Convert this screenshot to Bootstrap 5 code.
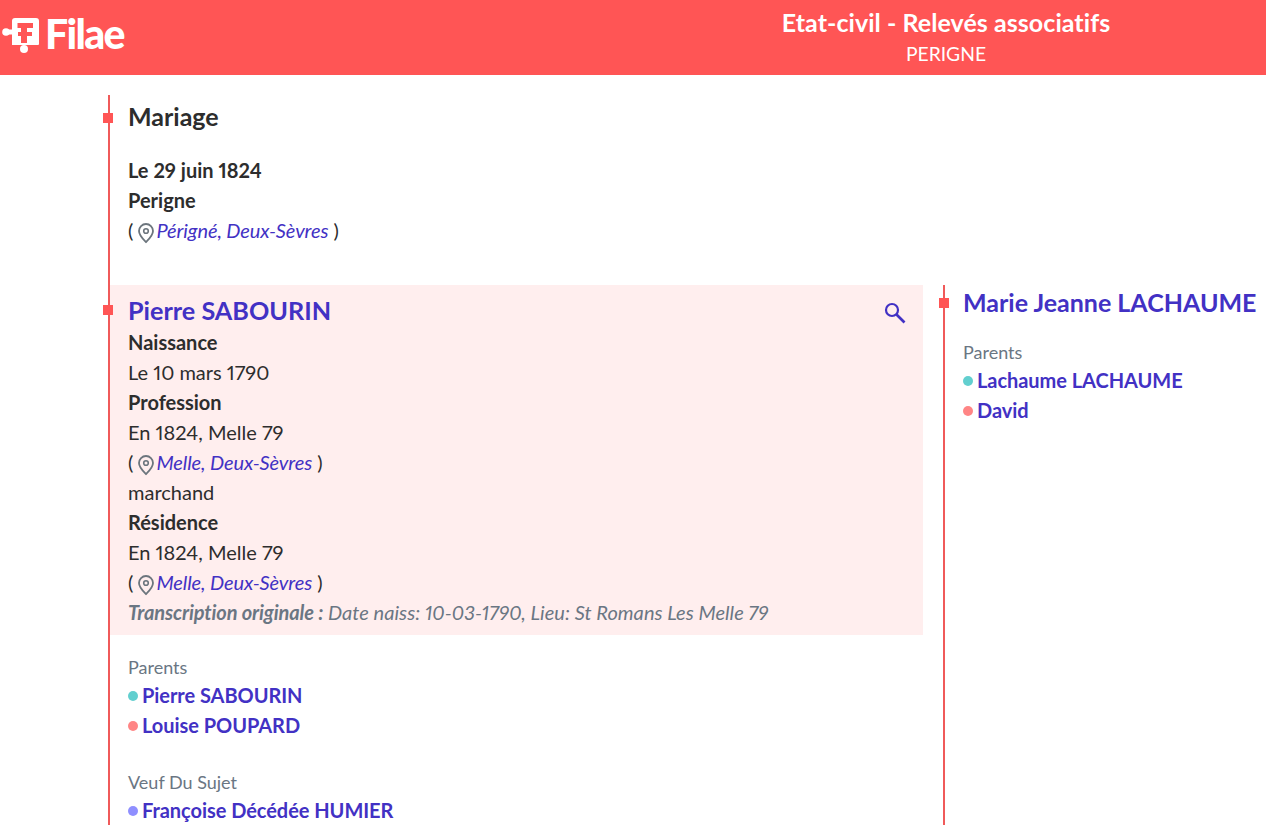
<!DOCTYPE html>
<html lang="fr">
<head>
<meta charset="utf-8">
<title>Filae</title>
<link href="https://cdn.jsdelivr.net/npm/bootstrap@5.3.0/dist/css/bootstrap.min.css" rel="stylesheet">
<style>
html,body{height:835px;overflow:hidden}
body{font-family:Lato,"Liberation Sans",sans-serif;font-size:20px;line-height:30px;color:#2d2d2d;background:#fff;font-variant-ligatures:none;font-variant-numeric:proportional-nums}
.top-band{height:75px;background:#ff5555;color:#fff}
.brand-box{width:626px;height:70px;padding-left:2px}
.band-title{width:640px;text-align:center}
.band-title .t1{font-size:25px;font-weight:700;line-height:34px;padding-top:5px;letter-spacing:.06px}
.band-title .t2{font-size:19.3px;line-height:26px;padding-top:2px}
.brand-name{font-weight:900;font-size:41px;line-height:40px;letter-spacing:-1.7px;margin:-3px 0 0 5px}
.act-root{margin:20px 0 0 108px;height:730px;border-left:2px solid #f05a5a}
.dot-mark{position:absolute;left:-7px;width:10px;height:10px;background:#ff5555}
.head-block{position:relative;padding:0 0 0 18px;height:190px}
.head-block .dot-mark{top:18px}
.head-block h2{font-size:25px;font-weight:700;line-height:43px;margin:0 0 17px;color:#2d2d2d}
.fw-b{font-weight:700}
a.plain{color:#4231c4;text-decoration:none;letter-spacing:-.1px}
.pin{width:18px;height:22px;vertical-align:-6px;margin:0 1px 0 -1px}
.col-main{width:813px;flex:none}
.hilite{position:relative;background:#ffeeee;height:350px;padding:9px 18px 0}
.hilite .dot-mark{top:20px}
.pname{font-size:25.2px;font-weight:700;line-height:32px;margin-bottom:1px;color:#4231c4}
.zoom-ico{position:absolute;right:17px;top:17px;width:22px;height:22px}
.muted-it{color:#6a7683;font-style:italic;letter-spacing:.04px}
.muted-it b{letter-spacing:-.1px}
.rel-block{padding-left:18px;margin-top:19px}
.rel-head{font-size:18px;color:#6a7683;line-height:26px}
.rel-item{font-weight:700;line-height:30px;color:#4231c4;display:flex;align-items:center;letter-spacing:-.05px}
.bul{width:10px;height:10px;border-radius:50%;margin-right:4px;flex:none;position:relative;top:1px}
.bul-a{background:#62cfcf}
.bul-b{background:#ff8585}
.bul-c{background:#8f8fff}
.rel-gap{margin-top:29px}
.col-side{position:relative;margin-left:20px;border-left:2px solid #f05a5a;width:323px;height:540px;flex:none;padding-left:18px;white-space:nowrap}
.col-side .dot-mark{top:13px;left:-6px}
.sname{font-size:25px;font-weight:700;line-height:34px;color:#4231c4}
.col-side .rel-block{padding-left:0;margin-top:20px}
</style>
</head>
<body>
<div class="top-band d-flex">
  <div class="brand-box d-flex align-items-center">
    <svg width="38" height="38" viewBox="0 0 38 38" aria-hidden="true">
      <circle cx="4" cy="16" r="3.800" fill="#fff"/><circle cx="22" cy="33" r="4" fill="#fff"/>
      <path d="M5 13.500h5V5q0-3 3-3h21q3 0 3 3v23q0 1-1 1H10V18.500H5z" fill="#fff"/>
      <path d="M15.500 7H31v5H25v4h5v4h-5v7h-6v-7h-3v-4h3v-4h-3.500z" fill="#ff5555"/>
    </svg>
    <span class="brand-name">Filae</span>
  </div>
  <div class="band-title">
    <div class="t1">Etat-civil - Relevés associatifs</div>
    <div class="t2">PERIGNE</div>
  </div>
</div>
<div class="act-root">
  <section class="head-block">
    <span class="dot-mark"></span>
    <h2>Mariage</h2>
    <div class="fw-b">Le 29 juin 1824</div>
    <div class="fw-b">Perigne</div>
    <div>( <svg class="pin" viewBox="0 0 18 22" aria-hidden="true"><path d="M9 20C6.500 17.500 2 13.500 2 9a7 7 0 0 1 14 0c0 4.500-4.500 8.500-7 11z" fill="none" stroke="#6c757d" stroke-width="1.800"/><circle cx="9" cy="9" r="2.300" fill="none" stroke="#6c757d" stroke-width="1.600"/></svg><a class="plain fst-italic" href="#">Périgné, Deux-Sèvres</a> )</div>
  </section>
  <div class="d-flex">
    <div class="col-main">
      <section class="hilite">
        <span class="dot-mark"></span>
        <div class="pname">Pierre SABOURIN</div>
        <svg class="zoom-ico" viewBox="0 0 22 22" aria-hidden="true"><circle cx="8" cy="8" r="6" fill="none" stroke="#4231c4" stroke-width="2.200"/><path d="M12.500 12.500l8 8" stroke="#4231c4" stroke-width="2.600"/></svg>
        <div class="fw-b">Naissance</div>
        <div>Le 10 mars 1790</div>
        <div class="fw-b">Profession</div>
        <div>En 1824, Melle 79</div>
        <div>( <svg class="pin" viewBox="0 0 18 22" aria-hidden="true"><path d="M9 20C6.500 17.500 2 13.500 2 9a7 7 0 0 1 14 0c0 4.500-4.500 8.500-7 11z" fill="none" stroke="#6c757d" stroke-width="1.800"/><circle cx="9" cy="9" r="2.300" fill="none" stroke="#6c757d" stroke-width="1.600"/></svg><a class="plain fst-italic" href="#">Melle, Deux-Sèvres</a> )</div>
        <div>marchand</div>
        <div class="fw-b">Résidence</div>
        <div>En 1824, Melle 79</div>
        <div>( <svg class="pin" viewBox="0 0 18 22" aria-hidden="true"><path d="M9 20C6.500 17.500 2 13.500 2 9a7 7 0 0 1 14 0c0 4.500-4.500 8.500-7 11z" fill="none" stroke="#6c757d" stroke-width="1.800"/><circle cx="9" cy="9" r="2.300" fill="none" stroke="#6c757d" stroke-width="1.600"/></svg><a class="plain fst-italic" href="#">Melle, Deux-Sèvres</a> )</div>
        <div class="muted-it"><b>Transcription originale :</b> Date naiss: 10-03-1790, Lieu: St Romans Les Melle 79</div>
      </section>
      <div class="rel-block">
        <div class="rel-head">Parents</div>
        <div class="rel-item"><span class="bul bul-a"></span>Pierre SABOURIN</div>
        <div class="rel-item"><span class="bul bul-b"></span>Louise POUPARD</div>
      </div>
      <div class="rel-block rel-gap">
        <div class="rel-head">Veuf Du Sujet</div>
        <div class="rel-item"><span class="bul bul-c"></span>Françoise Décédée HUMIER</div>
      </div>
    </div>
    <aside class="col-side">
      <span class="dot-mark"></span>
      <div class="sname">Marie Jeanne LACHAUME</div>
      <div class="rel-block">
        <div class="rel-head">Parents</div>
        <div class="rel-item"><span class="bul bul-a"></span>Lachaume LACHAUME</div>
        <div class="rel-item"><span class="bul bul-b"></span>David</div>
      </div>
    </aside>
  </div>
</div>
</body>
</html>
